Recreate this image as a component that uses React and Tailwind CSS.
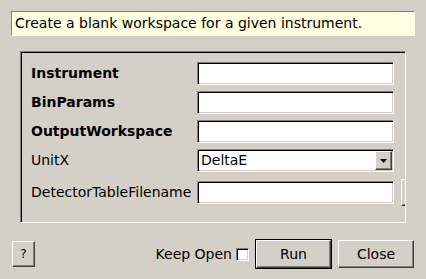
const sunken =
  "border border-t-[#808080] border-l-[#808080] border-r-white border-b-white shadow-[inset_1px_1px_0_#000,inset_-1px_-1px_0_#d4d0c8]";
const raised =
  "border border-t-white border-l-white border-r-[#404040] border-b-[#404040] shadow-[inset_-1px_-1px_0_#808080]";

function Field({ label, bold, children }) {
  return (
    <div className="flex items-center h-[23px]">
      <div className={"w-[166px] shrink-0 " + (bold ? "font-bold" : "")}>{label}</div>
      {children}
    </div>
  );
}

function TextBox() {
  return <div className={"w-[197px] h-[23px] shrink-0 bg-white " + sunken}></div>;
}

export default function App() {
  return (
    <div className="w-[426px] h-[279px] bg-[#d4d0c8] overflow-hidden font-['DejaVu_Sans',sans-serif] text-[14px] text-black">
      <div className="pt-[11px] px-[11px]">
        <div className="h-[25px] bg-[#ffffe1] border border-t-[#808080] border-l-[#808080] border-r-white border-b-white flex items-center pl-[3px]">
          Create a blank workspace for a given instrument.
        </div>
      </div>

      <div className="ml-[20px] mt-[15px] w-[386px] h-[172px] overflow-hidden border border-t-[#808080] border-l-[#808080] border-r-white border-b-white shadow-[inset_1px_1px_0_#000]">
        <div className="pl-[10px] pt-[10px] flex flex-col">
          <Field label="Instrument" bold>
            <TextBox />
          </Field>
          <div className="h-[6px]" />
          <Field label="BinParams" bold>
            <TextBox />
          </Field>
          <div className="h-[6px]" />
          <Field label="OutputWorkspace" bold>
            <TextBox />
          </Field>
          <div className="h-[6px]" />
          <Field label="UnitX">
            <div className={"w-[197px] h-[23px] shrink-0 bg-white flex items-center justify-between pl-[3px] pr-[1px] " + sunken}>
              <span>DeltaE</span>
              <div className={"w-[17px] h-[19px] bg-[#d4d0c8] flex items-center justify-center " + raised}>
                <svg width="7" height="4" viewBox="0 0 7 4">
                  <path d="M0 0H7L3.5 4Z" fill="#000" />
                </svg>
              </div>
            </div>
          </Field>
          <div className="h-[9px]" />
          <div className="flex items-center h-[23px]">
            <div className="w-[166px] shrink-0">DetectorTableFilename</div>
            <TextBox />
            <div className={"ml-[7px] w-[60px] h-[27px] shrink-0 bg-[#d4d0c8] " + raised}></div>
          </div>
        </div>
      </div>

      <div className="flex items-center h-[30px] mt-[16px] pl-[12px] pr-[12px]">
        <button className={"w-[23px] h-[26px] bg-[#d4d0c8] flex items-center justify-center text-[12px] " + raised}>?</button>
        <div className="flex-1" />
        <span>Keep Open</span>
        <div className={"ml-[4px] w-[13px] h-[13px] bg-white " + sunken}></div>
        <div className="ml-[6px] w-[77px] h-[30px] border border-black">
          <button className={"w-full h-full bg-[#d4d0c8] flex items-center justify-center " + raised}>Run</button>
        </div>
        <button className={"ml-[6px] w-[76px] h-[28px] bg-[#d4d0c8] flex items-center justify-center " + raised}>Close</button>
      </div>
    </div>
  );
}
